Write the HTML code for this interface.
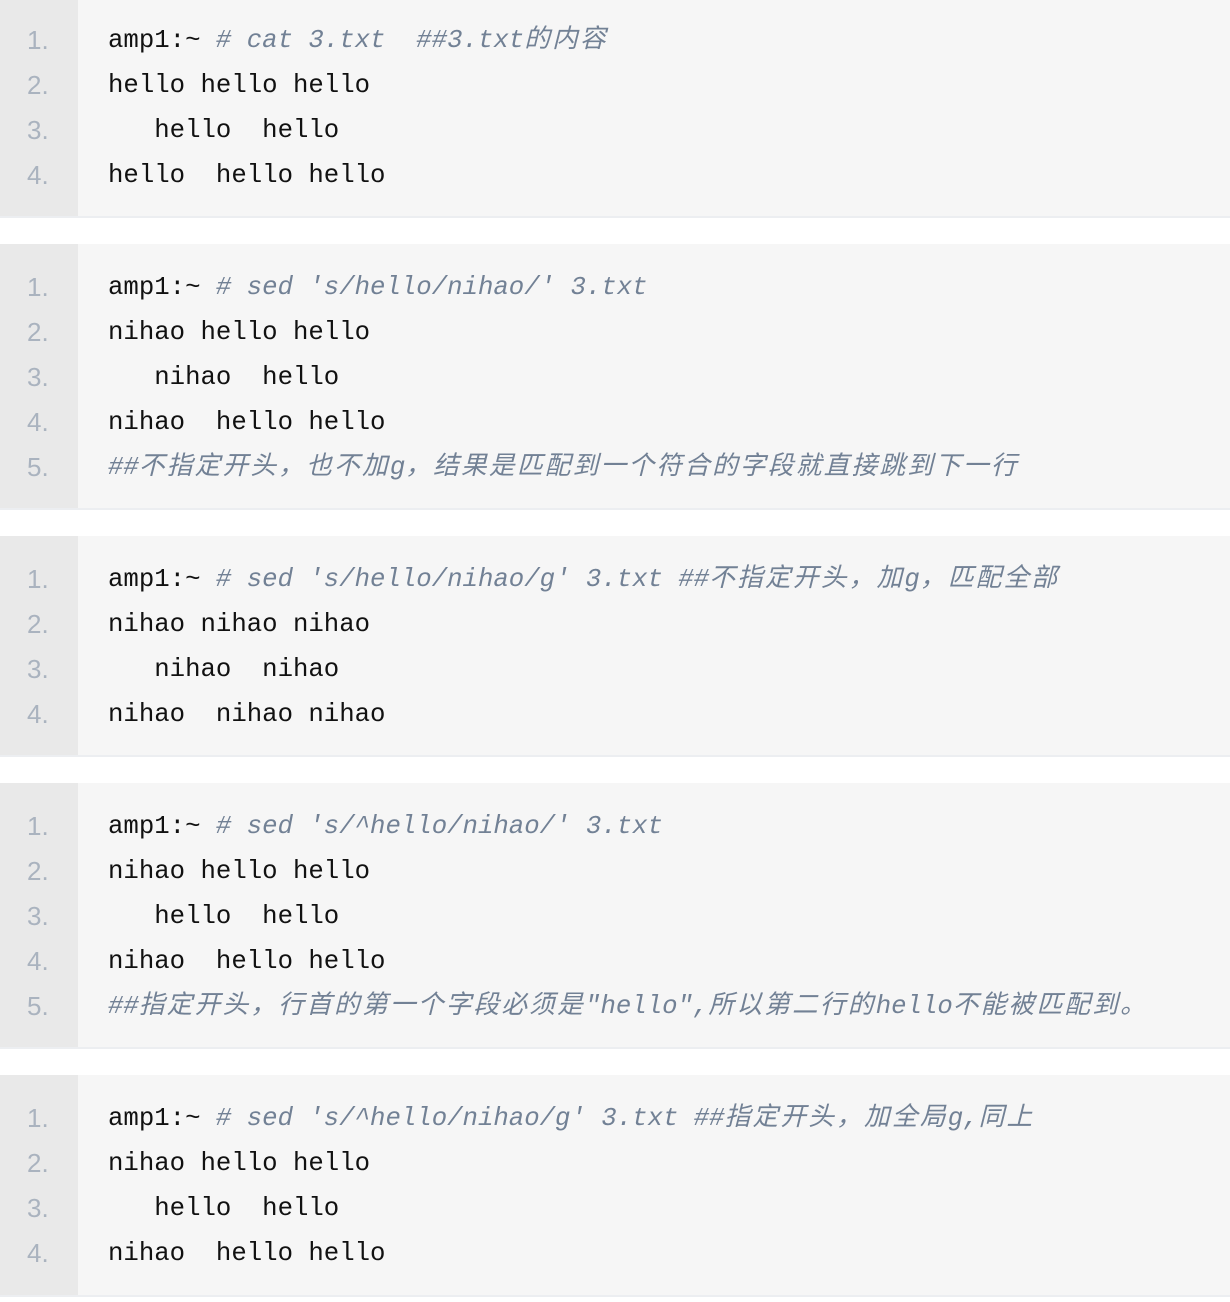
<!DOCTYPE html>
<html><head><meta charset="utf-8"><style>
body{margin:0;width:1230px;height:1302px;background:#fff;position:relative;overflow:hidden}
.b{position:absolute;left:0;width:1230px;background:#f6f6f6;border-bottom:2px solid #eceef1;box-sizing:border-box}
.g{position:absolute;left:0;top:0;bottom:0;width:78px;background:#e9e9e9}
.l{position:absolute;left:0;height:45px;line-height:45px;width:1230px;white-space:pre;font-family:"Liberation Mono","Noto Sans CJK SC",monospace;font-size:25.7px;color:#111;margin-top:1px}
.n{position:absolute;left:27px;font-family:"Liberation Sans",sans-serif;font-size:26px;color:#aab3bf}
.t{position:absolute;left:108px}
i{color:#728195;font-style:italic}
c{letter-spacing:2.2px}
</style></head><body>

<div class="b" style="top:-3px;height:221px"><div class="g"></div>
<div class="l" style="top:20px"><span class="n">1.</span><span class="t">amp1:~ <i># cat 3.txt  ##3.txt<c>的内容</c></i></span></div>
<div class="l" style="top:65px"><span class="n">2.</span><span class="t">hello hello hello</span></div>
<div class="l" style="top:110px"><span class="n">3.</span><span class="t">   hello  hello</span></div>
<div class="l" style="top:155px"><span class="n">4.</span><span class="t">hello  hello hello</span></div>
</div>

<div class="b" style="top:244px;height:266px"><div class="g"></div>
<div class="l" style="top:20px"><span class="n">1.</span><span class="t">amp1:~ <i># sed 's/hello/nihao/' 3.txt</i></span></div>
<div class="l" style="top:65px"><span class="n">2.</span><span class="t">nihao hello hello</span></div>
<div class="l" style="top:110px"><span class="n">3.</span><span class="t">   nihao  hello</span></div>
<div class="l" style="top:155px"><span class="n">4.</span><span class="t">nihao  hello hello</span></div>
<div class="l" style="top:200px"><span class="n">5.</span><span class="t"><i>##<c>不指定开头，也不加</c>g<c>，结果是匹配到一个符合的字段就直接跳到下一行</c></i></span></div>
</div>

<div class="b" style="top:536px;height:221px"><div class="g"></div>
<div class="l" style="top:20px"><span class="n">1.</span><span class="t">amp1:~ <i># sed 's/hello/nihao/g' 3.txt ##<c>不指定开头，加</c>g<c>，匹配全部</c></i></span></div>
<div class="l" style="top:65px"><span class="n">2.</span><span class="t">nihao nihao nihao</span></div>
<div class="l" style="top:110px"><span class="n">3.</span><span class="t">   nihao  nihao</span></div>
<div class="l" style="top:155px"><span class="n">4.</span><span class="t">nihao  nihao nihao</span></div>
</div>

<div class="b" style="top:783px;height:266px"><div class="g"></div>
<div class="l" style="top:20px"><span class="n">1.</span><span class="t">amp1:~ <i># sed 's/^hello/nihao/' 3.txt</i></span></div>
<div class="l" style="top:65px"><span class="n">2.</span><span class="t">nihao hello hello</span></div>
<div class="l" style="top:110px"><span class="n">3.</span><span class="t">   hello  hello</span></div>
<div class="l" style="top:155px"><span class="n">4.</span><span class="t">nihao  hello hello</span></div>
<div class="l" style="top:200px"><span class="n">5.</span><span class="t"><i>##<c>指定开头，行首的第一个字段必须是</c>"hello",<c>所以第二行的</c>hello<c>不能被匹配到。</c></i></span></div>
</div>

<div class="b" style="top:1075px;height:222px"><div class="g"></div>
<div class="l" style="top:20px"><span class="n">1.</span><span class="t">amp1:~ <i># sed 's/^hello/nihao/g' 3.txt ##<c>指定开头，加全局</c>g,<c>同上</c></i></span></div>
<div class="l" style="top:65px"><span class="n">2.</span><span class="t">nihao hello hello</span></div>
<div class="l" style="top:110px"><span class="n">3.</span><span class="t">   hello  hello</span></div>
<div class="l" style="top:155px"><span class="n">4.</span><span class="t">nihao  hello hello</span></div>
</div>
</body></html>
